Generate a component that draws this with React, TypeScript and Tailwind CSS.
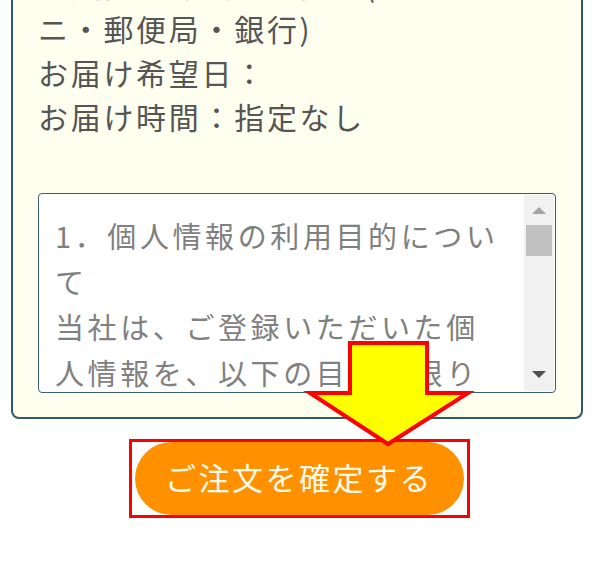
import React from 'react';

const boxLines = [
  'お支払い方法：後払い(コンビ',
  'ニ・郵便局・銀行)',
  'お届け希望日：',
  'お届け時間：指定なし',
];

const policyLines = [
  '1．個人情報の利用目的につい',
  'て',
  '当社は、ご登録いただいた個',
  '人情報を、以下の目的に限り',
  '利用いたします。',
];

function ScrollBar() {
  return (
    <div className="flex w-[30px] flex-col bg-[#f1f1f1] my-[1px] mr-[1px]">
      <div className="flex h-[30px] items-center justify-center">
        <div className="h-0 w-0 border-x-[7px] border-b-[7px] border-x-transparent border-b-[#a3a3a3]" />
      </div>
      <div className="mx-[2px] h-[31px] bg-[#c1c1c1]" />
      <div className="flex-1" />
      <div className="flex h-[34px] items-center justify-center">
        <div className="h-0 w-0 border-x-[7px] border-t-[7px] border-x-transparent border-t-[#505050]" />
      </div>
    </div>
  );
}

export default function App() {
  return (
    <div className="relative h-[563px] w-[598px] overflow-hidden bg-white font-['Noto_Sans_CJK_JP','Noto_Sans',sans-serif]">
      <div className="ml-[11px] mr-[15px] mt-[-64px] rounded-[8px] border-2 border-[#30596a] bg-[#fffff0] px-[25px] pb-[24px] pt-[24px]">
        <div className="text-[30px] leading-[44px] tracking-[2.7px] text-[#555555]">
          {boxLines.map((line) => (
            <div key={line} className="whitespace-nowrap">
              {line}
            </div>
          ))}
        </div>

        {/* terms box */}
        <div className="mt-[55px] flex h-[200px] overflow-hidden rounded-[4px] border-[1.5px] border-[#3a6070] bg-white">
          <div className="flex-1 overflow-hidden pl-[16px] pt-[19px] text-[29px] leading-[45.5px] tracking-[3.6px] text-[#808080]">
            {policyLines.map((line) => (
              <div key={line} className="whitespace-nowrap">
                {line}
              </div>
            ))}
          </div>
          <ScrollBar />
        </div>
      </div>

      <div className="mt-[20px] flex justify-center">
        <div className="h-[79px] w-[341px] border-[3px] border-[#ff0000] bg-white px-[3px]">
          <button className="flex h-full w-full items-center justify-center rounded-full bg-[#ff9100] pb-[2px] text-[31px] tracking-[2.5px] text-[#fffbea]">
            ご注文を確定する
          </button>
        </div>
      </div>

      {/* callout arrow */}
      <svg
        className="pointer-events-none absolute left-0 top-0"
        width="598"
        height="563"
        viewBox="0 0 598 563"
      >
        <polygon
          points="350,343 427,343 427,393 468,393 388,444 310,393 350,393"
          fill="#ffff00"
          stroke="#ff0000"
          strokeWidth="4"
          strokeLinejoin="miter"
        />
      </svg>
    </div>
  );
}
